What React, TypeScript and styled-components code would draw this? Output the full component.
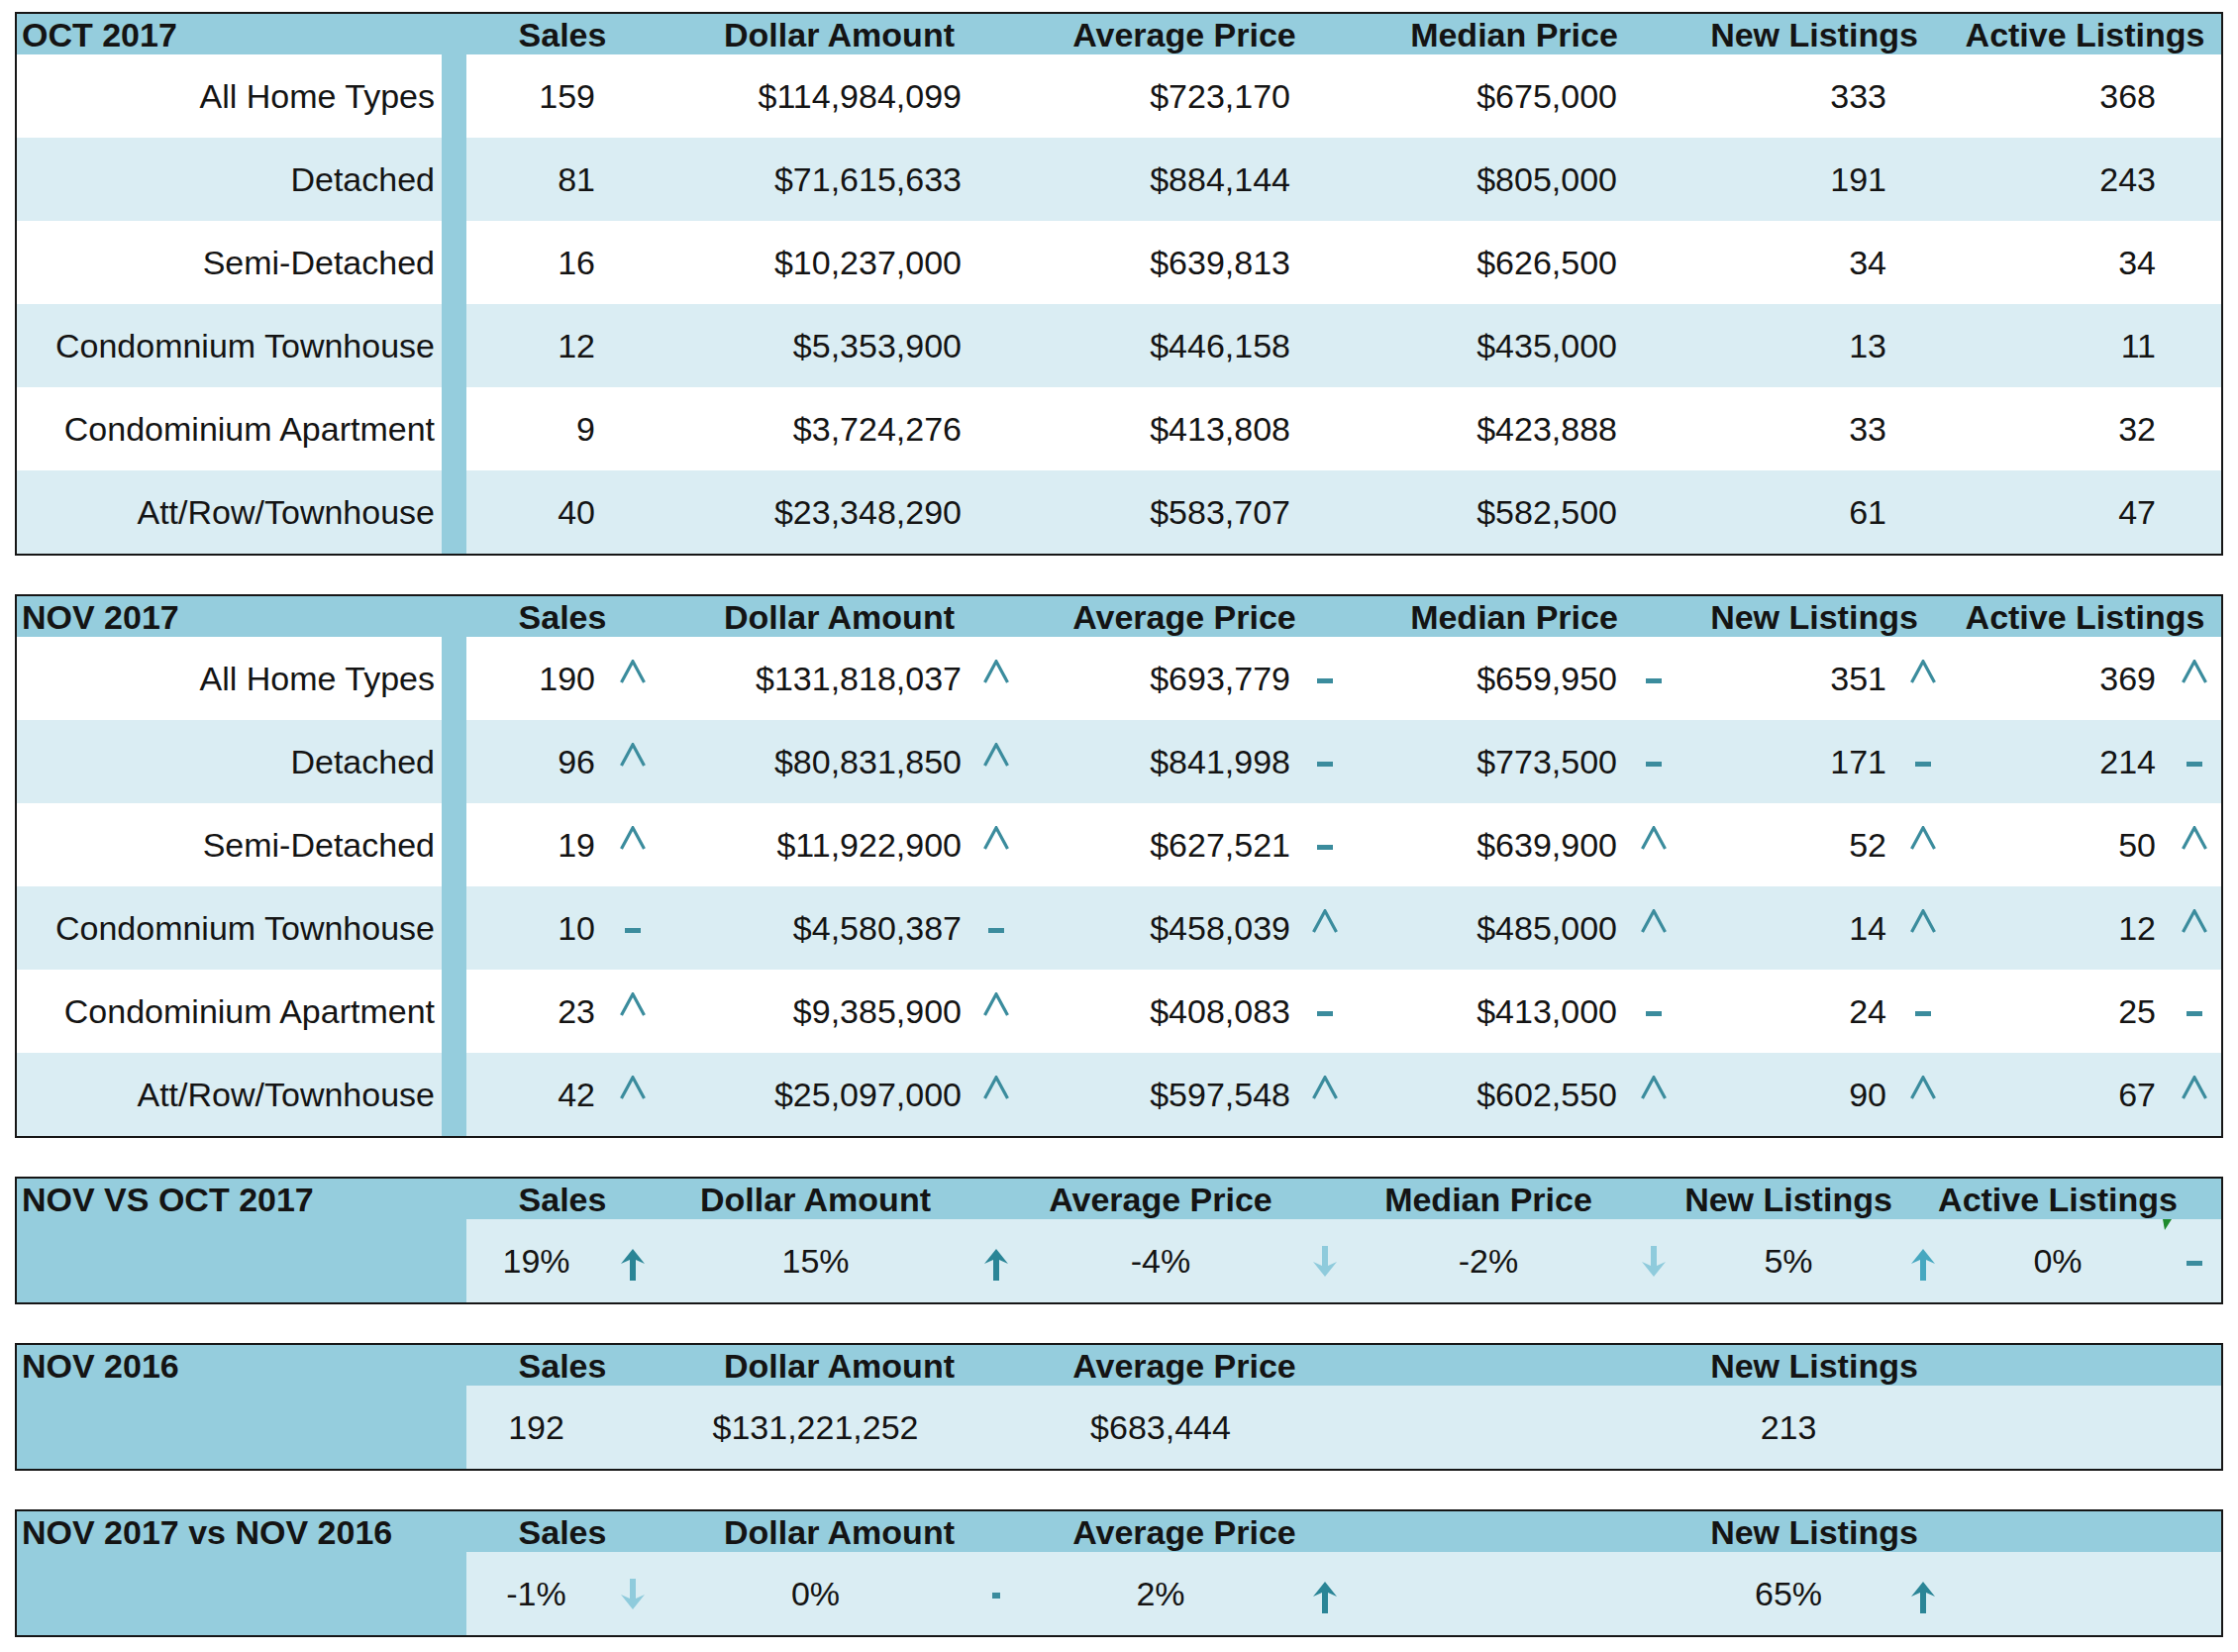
import React from 'react';
import styled, { createGlobalStyle } from 'styled-components';

const HEAD_BG = '#95cddd';
const ALT_BG = '#daedf3';
const INK = '#141414';
const TEAL = '#3b8c9d';
const DARK_TEAL = '#2a8596';
const MID_BLUE = '#46a8c0';
const LIGHT_BLUE = '#8fcbdc';

const COLS =
  '429px 25px 141px 53px 317px 48px 284px 48px 282px 52px 220px 52px 220px 55px';

const GlobalStyle = createGlobalStyle`
  html, body { margin: 0; padding: 0; background: #ffffff; }
  body {
    font-family: "Liberation Sans", Arial, Helvetica, sans-serif;
    color: ${INK};
  }
`;

const Page = styled.main`
  width: 2260px;
  box-sizing: border-box;
  padding: 12px 15px;
  display: flex;
  flex-direction: column;
  gap: 39px;
`;

const Table = styled.section`
  width: 2230px;
  box-sizing: border-box;
  border: 2px solid #161616;
  display: flex;
  flex-direction: column;
`;

const HeaderRow = styled.div`
  display: grid;
  grid-template-columns: ${COLS};
  height: 41px;
  align-items: center;
  background: ${HEAD_BG};
  font-size: 34px;
  font-weight: 700;
  line-height: 1;
`;

const Title = styled.div`
  grid-column: 1 / 3;
  padding-left: 5px;
  white-space: nowrap;
`;

const HeadCell = styled.div<{ $start: number; $span: number }>`
  grid-column: ${(p) => p.$start} / span ${(p) => p.$span};
  display: flex;
  justify-content: center;
  white-space: nowrap;
`;

const DataRow = styled.div<{ $alt?: boolean }>`
  display: grid;
  grid-template-columns: ${COLS};
  height: 84px;
  background: ${(p) => (p.$alt ? ALT_BG : '#ffffff')};
  font-size: 34px;
  line-height: 1;
`;

const Label = styled.div`
  grid-column: 1;
  display: flex;
  align-items: center;
  justify-content: flex-end;
  padding-right: 7px;
  white-space: nowrap;
`;

const Stripe = styled.div`
  grid-column: 2;
  background: ${HEAD_BG};
`;

const SideBlock = styled.div`
  grid-column: 1 / 3;
  background: ${HEAD_BG};
`;

const Value = styled.div<{ $col: number; $center?: boolean }>`
  grid-column: ${(p) => p.$col};
  position: relative;
  display: flex;
  align-items: center;
  justify-content: ${(p) => (p.$center ? 'center' : 'flex-end')};
  padding-right: ${(p) => (p.$center ? '0' : '11px')};
  white-space: nowrap;
`;

const Ind = styled.div<{ $col: number }>`
  grid-column: ${(p) => p.$col};
  display: flex;
  align-items: center;
  justify-content: center;
`;

const CaretSvg = styled.svg`
  transform: translateY(-7px);
`;

const DashMark = styled.span<{ $w: number; $h: number }>`
  display: block;
  width: ${(p) => p.$w}px;
  height: ${(p) => p.$h}px;
  background: ${TEAL};
  transform: translateY(2px);
`;

const ArrowSvg = styled.svg<{ $dy: number }>`
  transform: translateY(${(p) => p.$dy}px);
`;

const Marker = styled.svg`
  position: absolute;
  top: 0;
  right: -5px;
`;

type Kind = 'up' | 'dash' | 'arrowUp' | 'arrowUpMid' | 'arrowDown' | 'dot' | 'none';

const Indicator: React.FC<{ kind: Kind }> = ({ kind }) => {
  switch (kind) {
    case 'up':
      return (
        <CaretSvg width="28" height="24" viewBox="0 0 28 24">
          <polyline
            points="2.5,23 14,1.8 25.5,23"
            fill="none"
            stroke={TEAL}
            strokeWidth="3.2"
            strokeLinejoin="miter"
          />
        </CaretSvg>
      );
    case 'dash':
      return <DashMark $w={16} $h={5} />;
    case 'dot':
      return <DashMark $w={8} $h={6} />;
    case 'arrowUp':
    case 'arrowUpMid':
      return (
        <ArrowSvg $dy={4} width="26" height="32" viewBox="0 0 26 32">
          <polygon
            points="13,0 25,15 16,11 16,32 10,32 10,11 1,15"
            fill={kind === 'arrowUp' ? DARK_TEAL : MID_BLUE}
          />
        </ArrowSvg>
      );
    case 'arrowDown':
      return (
        <ArrowSvg $dy={0} width="26" height="31" viewBox="0 0 26 31">
          <polygon points="13,31 25,16 16,20 16,0 10,0 10,20 1,16" fill={LIGHT_BLUE} />
        </ArrowSvg>
      );
    default:
      return null;
  }
};

const METRICS = [
  'Sales',
  'Dollar Amount',
  'Average Price',
  'Median Price',
  'New Listings',
  'Active Listings',
];

const valueCol = (m: number) => 3 + 2 * m;
const indCol = (m: number) => 4 + 2 * m;

type Cell = [string, Kind?];

interface DetailRow {
  label: string;
  cells: Cell[];
}

const OCT: DetailRow[] = [
  { label: 'All Home Types', cells: [['159'], ['$114,984,099'], ['$723,170'], ['$675,000'], ['333'], ['368']] },
  { label: 'Detached', cells: [['81'], ['$71,615,633'], ['$884,144'], ['$805,000'], ['191'], ['243']] },
  { label: 'Semi-Detached', cells: [['16'], ['$10,237,000'], ['$639,813'], ['$626,500'], ['34'], ['34']] },
  { label: 'Condomnium Townhouse', cells: [['12'], ['$5,353,900'], ['$446,158'], ['$435,000'], ['13'], ['11']] },
  { label: 'Condominium Apartment', cells: [['9'], ['$3,724,276'], ['$413,808'], ['$423,888'], ['33'], ['32']] },
  { label: 'Att/Row/Townhouse', cells: [['40'], ['$23,348,290'], ['$583,707'], ['$582,500'], ['61'], ['47']] },
];

const NOV: DetailRow[] = [
  {
    label: 'All Home Types',
    cells: [['190', 'up'], ['$131,818,037', 'up'], ['$693,779', 'dash'], ['$659,950', 'dash'], ['351', 'up'], ['369', 'up']],
  },
  {
    label: 'Detached',
    cells: [['96', 'up'], ['$80,831,850', 'up'], ['$841,998', 'dash'], ['$773,500', 'dash'], ['171', 'dash'], ['214', 'dash']],
  },
  {
    label: 'Semi-Detached',
    cells: [['19', 'up'], ['$11,922,900', 'up'], ['$627,521', 'dash'], ['$639,900', 'up'], ['52', 'up'], ['50', 'up']],
  },
  {
    label: 'Condomnium Townhouse',
    cells: [['10', 'dash'], ['$4,580,387', 'dash'], ['$458,039', 'up'], ['$485,000', 'up'], ['14', 'up'], ['12', 'up']],
  },
  {
    label: 'Condominium Apartment',
    cells: [['23', 'up'], ['$9,385,900', 'up'], ['$408,083', 'dash'], ['$413,000', 'dash'], ['24', 'dash'], ['25', 'dash']],
  },
  {
    label: 'Att/Row/Townhouse',
    cells: [['42', 'up'], ['$25,097,000', 'up'], ['$597,548', 'up'], ['$602,550', 'up'], ['90', 'up'], ['67', 'up']],
  },
];

const DetailTable: React.FC<{ title: string; rows: DetailRow[] }> = ({ title, rows }) => (
  <Table>
    <HeaderRow>
      <Title>{title}</Title>
      {METRICS.map((m, i) => (
        <HeadCell key={m} $start={valueCol(i)} $span={2}>
          {m}
        </HeadCell>
      ))}
    </HeaderRow>
    {rows.map((r, ri) => (
      <DataRow key={r.label} $alt={ri % 2 === 1}>
        <Label>{r.label}</Label>
        <Stripe />
        {r.cells.map(([v, k], ci) => (
          <React.Fragment key={ci}>
            <Value $col={valueCol(ci)}>{v}</Value>
            <Ind $col={indCol(ci)}>{k ? <Indicator kind={k} /> : null}</Ind>
          </React.Fragment>
        ))}
      </DataRow>
    ))}
  </Table>
);

interface SummaryCell {
  metric: number;
  value: string;
  kind?: Kind;
  marker?: boolean;
  headSpan?: number;
}

const SummaryTable: React.FC<{ title: string; cells: SummaryCell[] }> = ({ title, cells }) => (
  <Table>
    <HeaderRow>
      <Title>{title}</Title>
      {cells.map((c) => (
        <HeadCell key={c.metric} $start={valueCol(c.metric)} $span={c.headSpan ?? 2}>
          {METRICS[c.metric]}
        </HeadCell>
      ))}
    </HeaderRow>
    <DataRow $alt>
      <SideBlock />
      {cells.map((c) => (
        <React.Fragment key={c.metric}>
          <Value $col={valueCol(c.metric)} $center>
            {c.value}
            {c.marker ? (
              <Marker width="9" height="11" viewBox="0 0 9 11">
                <polygon points="0,0 9,0 2,11" fill="#1e8a2c" />
              </Marker>
            ) : null}
          </Value>
          <Ind $col={indCol(c.metric)}>{c.kind ? <Indicator kind={c.kind} /> : null}</Ind>
        </React.Fragment>
      ))}
    </DataRow>
  </Table>
);

export default function App() {
  return (
    <>
      <GlobalStyle />
      <Page>
        <DetailTable title="OCT 2017" rows={OCT} />
        <DetailTable title="NOV 2017" rows={NOV} />
        <SummaryTable
          title="NOV VS OCT 2017"
          cells={[
            { metric: 0, value: '19%', kind: 'arrowUp', headSpan: 2 },
            { metric: 1, value: '15%', kind: 'arrowUp', headSpan: 1 },
            { metric: 2, value: '-4%', kind: 'arrowDown', headSpan: 1 },
            { metric: 3, value: '-2%', kind: 'arrowDown', headSpan: 1 },
            { metric: 4, value: '5%', kind: 'arrowUpMid', headSpan: 1 },
            { metric: 5, value: '0%', kind: 'dash', marker: true, headSpan: 1 },
          ]}
        />
        <SummaryTable
          title="NOV 2016"
          cells={[
            { metric: 0, value: '192' },
            { metric: 1, value: '$131,221,252' },
            { metric: 2, value: '$683,444' },
            { metric: 4, value: '213' },
          ]}
        />
        <SummaryTable
          title="NOV 2017 vs NOV 2016"
          cells={[
            { metric: 0, value: '-1%', kind: 'arrowDown' },
            { metric: 1, value: '0%', kind: 'dot' },
            { metric: 2, value: '2%', kind: 'arrowUp' },
            { metric: 4, value: '65%', kind: 'arrowUp' },
          ]}
        />
      </Page>
    </>
  );
}
